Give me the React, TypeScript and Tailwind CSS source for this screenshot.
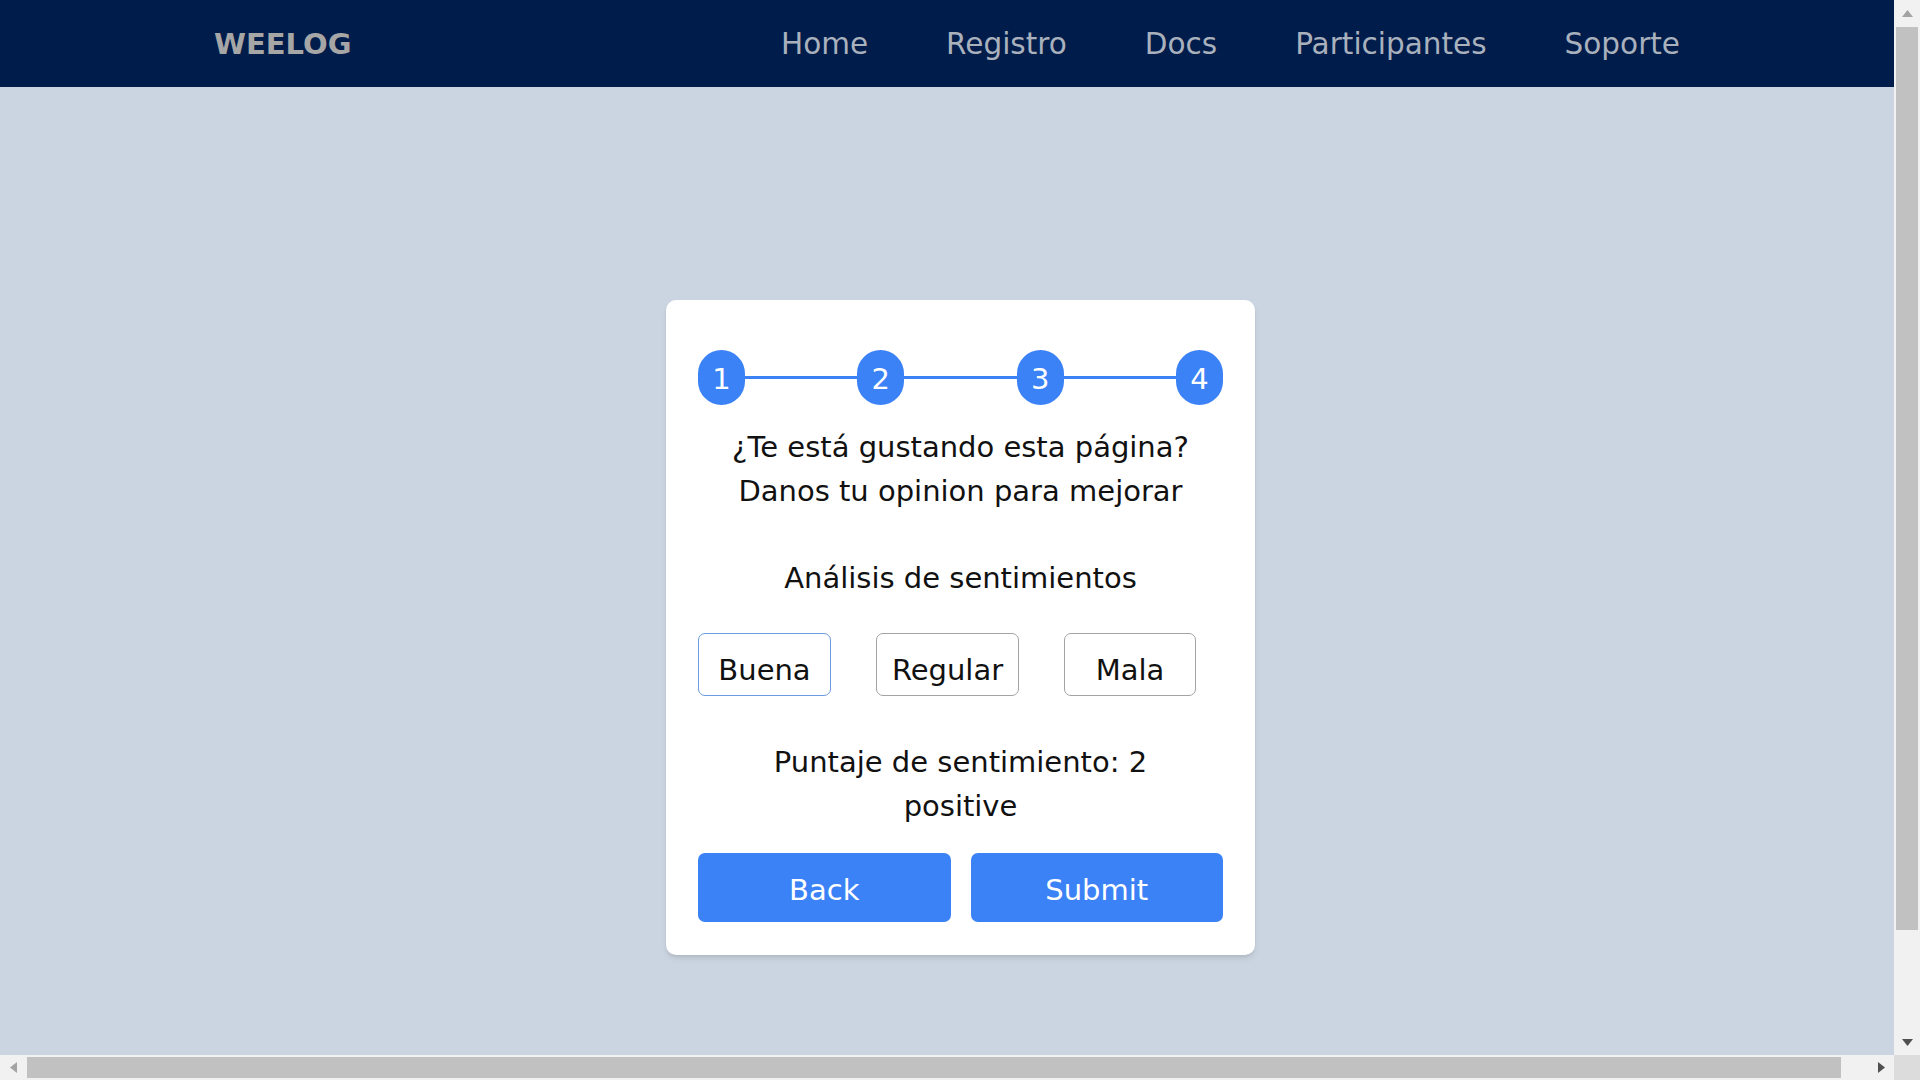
import React from "react";

function Arrow({ dir, color }: { dir: "up" | "down" | "left" | "right"; color: string }) {
  const pts: Record<string, string> = {
    up: "0,7 5.5,0 11,7",
    down: "0,0 11,0 5.5,7",
    left: "7,0 7,11 0,5.5",
    right: "0,0 7,5.5 0,11",
  };
  const vertical = dir === "up" || dir === "down";
  return (
    <svg width={vertical ? 11 : 7} height={vertical ? 7 : 11} viewBox={vertical ? "0 0 11 7" : "0 0 7 11"}>
      <polygon points={pts[dir]} fill={color} />
    </svg>
  );
}

function VerticalScrollbar() {
  return (
    <div className="flex w-[26px] shrink-0 flex-col bg-[#f1f1f1]">
      <div className="flex h-[26px] items-center justify-center">
        <Arrow dir="up" color="#a3a3a3" />
      </div>
      <div className="min-h-0 flex-1 px-[2px]">
        <div className="mt-[1px] h-[903px] bg-[#c1c1c1]" />
      </div>
      <div className="flex h-[26px] items-center justify-center">
        <Arrow dir="down" color="#505050" />
      </div>
    </div>
  );
}

function HorizontalScrollbar() {
  return (
    <div className="flex h-[25px] shrink-0">
      <div className="flex min-w-0 flex-1 bg-[#f1f1f1]">
        <div className="flex w-[26px] items-center justify-center">
          <Arrow dir="left" color="#a3a3a3" />
        </div>
        <div className="min-w-0 flex-1 py-[2px]">
          <div className="ml-[1px] h-full w-[1814px] bg-[#c1c1c1]" />
        </div>
        <div className="flex w-[26px] items-center justify-center">
          <Arrow dir="right" color="#505050" />
        </div>
      </div>
      <div className="w-[26px] bg-[#dcdcdc]" />
    </div>
  );
}

function Stepper() {
  const steps = [1, 2, 3, 4];
  return (
    <div className="flex items-center">
      {steps.map((n, i) => (
        <React.Fragment key={n}>
          <div className="flex h-[55px] w-[47px] shrink-0 items-center justify-center rounded-full bg-[#3b82f6] pt-[4px] text-[29px] leading-none text-white">
            {n}
          </div>
          {i < steps.length - 1 && <div className="h-[3px] flex-1 bg-[#3b82f6]" />}
        </React.Fragment>
      ))}
    </div>
  );
}

export default function App() {
  const navItems = ["Home", "Registro", "Docs", "Participantes", "Soporte"];
  return (
    <div className="flex h-screen w-screen flex-col overflow-hidden bg-[#cbd5e1] font-['DejaVu_Sans',sans-serif]">
      <div className="flex min-h-0 flex-1">
        <div className="min-w-0 flex-1 overflow-hidden">
          <nav className="flex h-[87px] items-center justify-between bg-[#001c4b] px-[214px]">
            <span className="pt-[2px] text-[29px] font-bold leading-none text-[#a6a6a6]">WEELOG</span>
            <ul className="flex gap-[78px] pt-[2px]">
              {navItems.map((item) => (
                <li key={item} className="text-[29.5px] leading-none text-[#a9b1bd]">
                  {item}
                </li>
              ))}
            </ul>
          </nav>
          <main className="flex h-[1080px] items-center justify-center pl-[27px]">
            <div className="flex w-[589px] flex-col rounded-[10px] bg-white px-[32px] pt-[50px] pb-[33px] text-[#111111] shadow-md">
              <Stepper />
              <p className="mt-[20px] text-center text-[29px] leading-[44px]">
                ¿Te está gustando esta página?
                <br />
                Danos tu opinion para mejorar
              </p>
              <p className="mt-[43px] text-center text-[29px] leading-[44px]">Análisis de sentimientos</p>
              <div className="mt-[33px] flex gap-[45px]">
                <button className="flex h-[63px] w-[133px] items-center justify-center rounded-[7px] border border-[#6b9be0] bg-white pt-[12px] text-[29px] leading-none text-[#111111]">
                  Buena
                </button>
                <button className="flex h-[63px] w-[143px] items-center justify-center rounded-[7px] border border-[#a3a3a3] bg-white pt-[12px] text-[29px] leading-none text-[#111111]">
                  Regular
                </button>
                <button className="flex h-[63px] w-[132px] items-center justify-center rounded-[7px] border border-[#a3a3a3] bg-white pt-[12px] text-[29px] leading-none text-[#111111]">
                  Mala
                </button>
              </div>
              <p className="mt-[44px] text-center text-[29px] leading-[44px]">
                Puntaje de sentimiento: 2
                <br />
                positive
              </p>
              <div className="mt-[25px] flex gap-[20px]">
                <button className="flex h-[69px] flex-1 items-center justify-center rounded-[7px] bg-[#3b82f6] pt-[6px] text-[29px] leading-none text-white">
                  Back
                </button>
                <button className="flex h-[69px] flex-1 items-center justify-center rounded-[7px] bg-[#3b82f6] pt-[6px] text-[29px] leading-none text-white">
                  Submit
                </button>
              </div>
            </div>
          </main>
        </div>
        <VerticalScrollbar />
      </div>
      <HorizontalScrollbar />
    </div>
  );
}
